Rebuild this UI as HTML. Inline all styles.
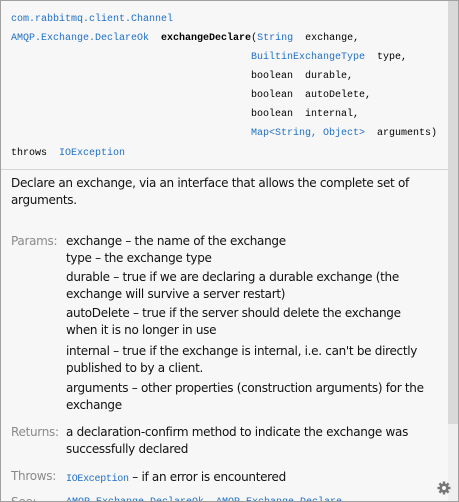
<!DOCTYPE html>
<html><head><style>
body{margin:0;width:459px;height:502px;overflow:hidden;background:#f7f7f7;}
#w{position:absolute;left:0;top:0;width:457px;height:500px;border:1px solid #a0a0a0;overflow:hidden;background:#f7f7f7;}
.m{position:absolute;font-family:"Liberation Mono","Noto Sans CJK SC",monospace;font-size:10px;color:#000;white-space:pre;line-height:12px;}
.a{color:#1f6fc5;}
.s{position:absolute;font-family:"DejaVu Sans","Liberation Sans",sans-serif;font-size:12px;color:#111;white-space:nowrap;line-height:14px;letter-spacing:-0.3px;}
.l{color:#8a8a8a;}
#sep{position:absolute;left:0;top:168px;width:448px;height:1px;background:#d4d4d4;}
#sb{position:absolute;left:447px;top:0;width:10px;height:500px;background:#efefef;}
#th{position:absolute;left:447px;top:0;width:10px;height:423px;background:#d9d9d9;}
</style></head><body><div id="w">
<div id="sb"></div><div id="th"></div>
<div class="m a" style="left:10px;top:13px">com.rabbitmq.client.Channel</div>
<div class="m" style="left:10px;top:32px"><span class="a">AMQP.Exchange.DeclareOk</span>  <b>exchangeDeclare</b>(<span class="a">String</span>  exchange,</div>
<div class="m" style="left:250px;top:51px"><span class="a">BuiltinExchangeType</span>  type,</div>
<div class="m" style="left:250px;top:70px">boolean  durable,</div>
<div class="m" style="left:250px;top:89px">boolean  autoDelete,</div>
<div class="m" style="left:250px;top:108px">boolean  internal,</div>
<div class="m" style="left:250px;top:127px"><span class="a">Map&lt;String, Object&gt;</span>  arguments)</div>
<div class="m" style="left:10px;top:147px">throws  <span class="a">IOException</span></div>
<div id="sep"></div>
<div class="s" style="left:10px;top:175px">Declare an exchange, via an interface that allows the complete set of</div>
<div class="s" style="left:10px;top:192px">arguments.</div>
<div class="s l" style="left:10px;top:233px">Params:</div>
<div class="s" style="left:65px;top:233px">exchange – the name of the exchange</div>
<div class="s" style="left:65px;top:250px">type – the exchange type</div>
<div class="s" style="left:65px;top:269px">durable – true if we are declaring a durable exchange (the</div>
<div class="s" style="left:65px;top:286px">exchange will survive a server restart)</div>
<div class="s" style="left:65px;top:305px">autoDelete – true if the server should delete the exchange</div>
<div class="s" style="left:65px;top:322px">when it is no longer in use</div>
<div class="s" style="left:65px;top:343px">internal – true if the exchange is internal, i.e. can't be directly</div>
<div class="s" style="left:65px;top:360px">published to by a client.</div>
<div class="s" style="left:65px;top:380px">arguments – other properties (construction arguments) for the</div>
<div class="s" style="left:65px;top:397px">exchange</div>
<div class="s l" style="left:10px;top:424px">Returns:</div>
<div class="s" style="left:65px;top:424px">a declaration-confirm method to indicate the exchange was</div>
<div class="s" style="left:65px;top:441px">successfully declared</div>
<div class="s l" style="left:10px;top:468px">Throws:</div>
<div class="s" style="left:65px;top:469px"><span class="m a" style="position:static">IOException</span> – if an error is encountered</div>
<div class="s l" style="left:10px;top:494px">See:</div>
<div class="m a" style="left:65px;top:496px">AMQP.Exchange.DeclareOk, AMQP.Exchange.Declare</div>
<svg style="position:absolute;left:436px;top:480px" width="14" height="14" viewBox="0 0 14 14"><g fill="#777"><circle cx="7" cy="7" r="4.6"/><rect x="5.8" y="0.5" width="2.4" height="13"/><rect x="0.5" y="5.8" width="13" height="2.4"/><rect x="5.8" y="0.5" width="2.4" height="13" transform="rotate(45 7 7)"/><rect x="5.8" y="0.5" width="2.4" height="13" transform="rotate(-45 7 7)"/></g><circle cx="7" cy="7" r="2" fill="#f7f7f7"/></svg>
</div></body></html>
